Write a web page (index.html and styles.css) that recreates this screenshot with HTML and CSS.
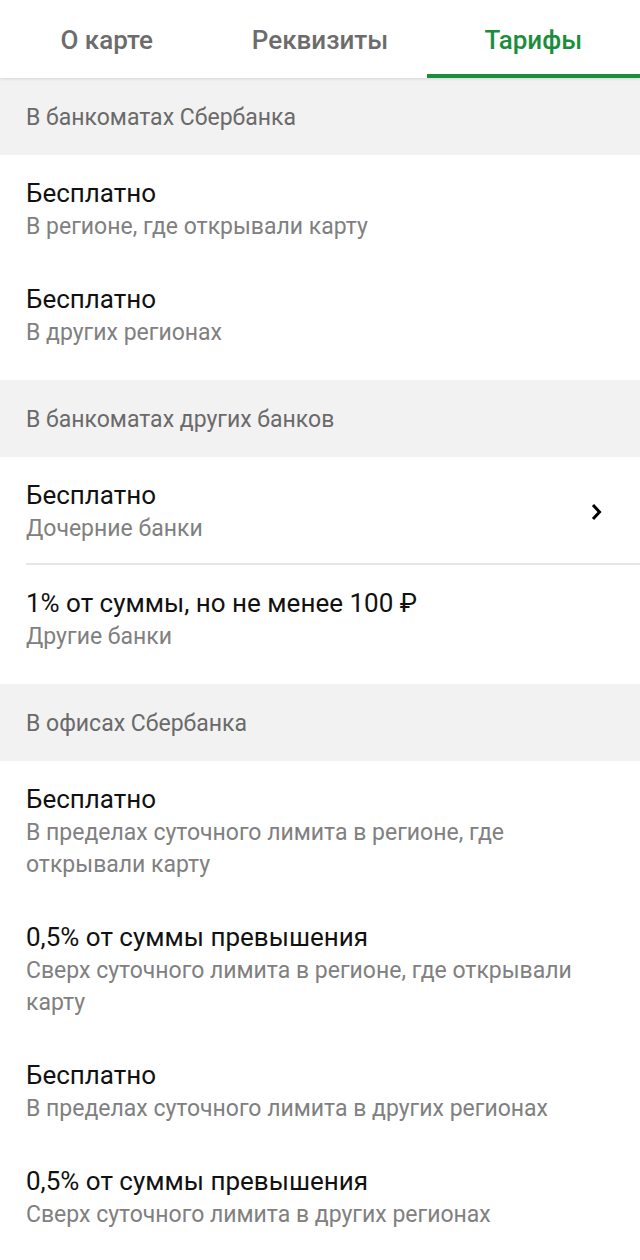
FILE: index.html
```html
<!DOCTYPE html>
<html lang="ru">
<head>
<meta charset="utf-8">
<link rel="stylesheet" href="styles.css">
</head>
<body>
<div class="tabs">
  <div class="tab">О карте</div>
  <div class="tab">Реквизиты</div>
  <div class="tab active">Тарифы</div>
</div>

<div class="section-title">В банкоматах Сбербанка</div>
<div class="list">
  <div class="item"><div class="text"><div class="title">Бесплатно</div><div class="sub">В регионе, где открывали карту</div></div></div>
  <div class="item"><div class="text"><div class="title">Бесплатно</div><div class="sub">В других регионах</div></div></div>
</div>

<div class="section-title">В банкоматах других банков</div>
<div class="list">
  <div class="item divided">
    <div class="text"><div class="title">Бесплатно</div><div class="sub">Дочерние банки</div></div>
    <svg class="chev" width="14" height="18" viewBox="0 0 14 18"><path d="M4 2 L10.5 9 L4 16" fill="none" stroke="#000" stroke-width="3"/></svg>
  </div>
  <div class="item"><div class="text"><div class="title">1% от суммы, но не менее 100 ₽</div><div class="sub">Другие банки</div></div></div>
</div>

<div class="section-title">В офисах Сбербанка</div>
<div class="list">
  <div class="item"><div class="text"><div class="title">Бесплатно</div><div class="sub">В пределах суточного лимита в регионе, где открывали карту</div></div></div>
  <div class="item"><div class="text"><div class="title">0,5% от суммы превышения</div><div class="sub">Сверх суточного лимита в регионе, где открывали карту</div></div></div>
  <div class="item"><div class="text"><div class="title">Бесплатно</div><div class="sub">В пределах суточного лимита в других регионах</div></div></div>
  <div class="item"><div class="text"><div class="title">0,5% от суммы превышения</div><div class="sub">Сверх суточного лимита в других регионах</div></div></div>
</div>
</body>
</html>
```

FILE: styles.css
```css
html, body {
  margin: 0;
  padding: 0;
  background: #fff;
  font-family: Roboto, "Noto Sans", sans-serif;
}
.tabs {
  display: flex;
  height: 78px;
  background: #fff;
  position: relative;
  box-shadow: 0 1px 3px rgba(0,0,0,0.12);
  z-index: 1;
}
.tab {
  flex: 1;
  display: flex;
  align-items: center;
  justify-content: center;
  font-size: 26px;
  font-weight: 500;
  color: #6c6c6c;
  box-sizing: border-box;
  padding-top: 2px;
}
.tab.active {
  color: #1b8e3e;
  border-bottom: 4px solid #1b8e3e;
  padding-top: 6px;
}
.section-title {
  background: #f2f2f2;
  height: 77px;
  display: flex;
  align-items: center;
  padding: 2px 26px 0 26px;
  box-sizing: border-box;
  font-size: 23px;
  color: #6a6a6a;
}
.list {
  padding-bottom: 13px;
}
.item {
  display: flex;
  align-items: center;
  padding: 21px 26px 18px 26px;
}
.item.divided {
  position: relative;
}
.item.divided::after {
  content: "";
  position: absolute;
  left: 26px;
  right: 0;
  bottom: -2px;
  height: 2px;
  background: #e6e6e6;
}
.item.divided + .item {
  margin-top: 2px;
}
.text {
  flex: 1;
}
.title {
  font-size: 26px;
  line-height: 35px;
  color: #111;
}
.sub {
  font-size: 23px;
  line-height: 32px;
  color: #808080;
}
.chev {
  margin-right: 11px;
  flex: none;
}
```
